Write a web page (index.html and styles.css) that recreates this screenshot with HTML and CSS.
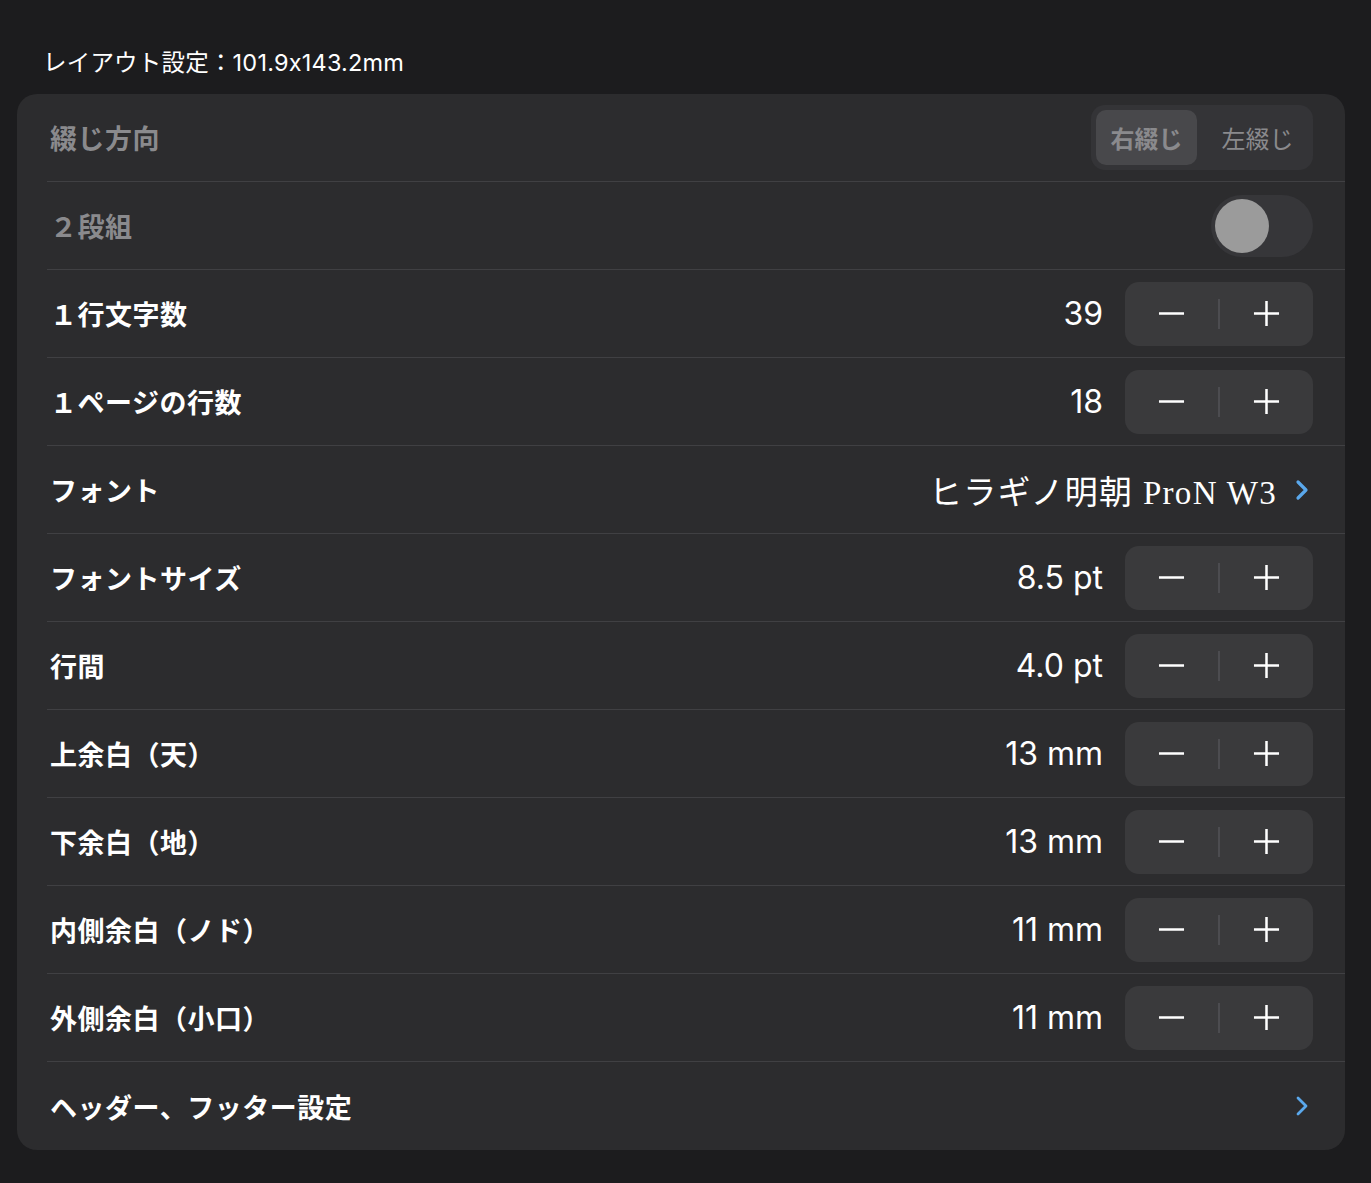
FILE: index.html
```html
<!DOCTYPE html>
<html lang="ja">
<head>
    <meta charset="UTF-8">
    <meta name="viewport" content="width=device-width, initial-scale=1.0">
    <title>レイアウト設定</title>
    <link rel="stylesheet" href="styles.css">
</head>
<body>

<div class="page">
    <div class="section-title">レイアウト設定：101.9x143.2mm</div>

    <div class="card">
        <!-- 綴じ方向 -->
        <div class="row">
            <div class="label disabled">綴じ方向</div>
            <div class="segmented">
                <div class="segment selected">右綴じ</div>
                <div class="segment">左綴じ</div>
            </div>
        </div>

        <!-- 2段組 -->
        <div class="row">
            <div class="label disabled">２段組</div>
            <div class="toggle"><div class="knob"></div></div>
        </div>

        <div class="row">
            <div class="label">１行文字数</div>
            <div class="control">
                <span class="value">39</span>
                <div class="stepper">
                    <button class="step"><svg viewBox="0 0 28 28"><path d="M1 14h26"/></svg></button>
                    <span class="divider"></span>
                    <button class="step"><svg viewBox="0 0 28 28"><path d="M1 14h26M14 1v26"/></svg></button>
                </div>
            </div>
        </div>

        <div class="row">
            <div class="label">１ページの行数</div>
            <div class="control">
                <span class="value">18</span>
                <div class="stepper">
                    <button class="step"><svg viewBox="0 0 28 28"><path d="M1 14h26"/></svg></button>
                    <span class="divider"></span>
                    <button class="step"><svg viewBox="0 0 28 28"><path d="M1 14h26M14 1v26"/></svg></button>
                </div>
            </div>
        </div>

        <div class="row">
            <div class="label">フォント</div>
            <div class="control">
                <span class="font-name">ヒラギノ明朝 ProN W3</span>
                <svg class="chevron" viewBox="0 0 14 22"><path d="M3 3l8 8-8 8"/></svg>
            </div>
        </div>

        <div class="row">
            <div class="label">フォントサイズ</div>
            <div class="control">
                <span class="value">8.5 pt</span>
                <div class="stepper">
                    <button class="step"><svg viewBox="0 0 28 28"><path d="M1 14h26"/></svg></button>
                    <span class="divider"></span>
                    <button class="step"><svg viewBox="0 0 28 28"><path d="M1 14h26M14 1v26"/></svg></button>
                </div>
            </div>
        </div>

        <div class="row">
            <div class="label">行間</div>
            <div class="control">
                <span class="value">4.0 pt</span>
                <div class="stepper">
                    <button class="step"><svg viewBox="0 0 28 28"><path d="M1 14h26"/></svg></button>
                    <span class="divider"></span>
                    <button class="step"><svg viewBox="0 0 28 28"><path d="M1 14h26M14 1v26"/></svg></button>
                </div>
            </div>
        </div>

        <div class="row">
            <div class="label">上余白（天）</div>
            <div class="control">
                <span class="value">13 mm</span>
                <div class="stepper">
                    <button class="step"><svg viewBox="0 0 28 28"><path d="M1 14h26"/></svg></button>
                    <span class="divider"></span>
                    <button class="step"><svg viewBox="0 0 28 28"><path d="M1 14h26M14 1v26"/></svg></button>
                </div>
            </div>
        </div>

        <div class="row">
            <div class="label">下余白（地）</div>
            <div class="control">
                <span class="value">13 mm</span>
                <div class="stepper">
                    <button class="step"><svg viewBox="0 0 28 28"><path d="M1 14h26"/></svg></button>
                    <span class="divider"></span>
                    <button class="step"><svg viewBox="0 0 28 28"><path d="M1 14h26M14 1v26"/></svg></button>
                </div>
            </div>
        </div>

        <div class="row">
            <div class="label">内側余白（ノド）</div>
            <div class="control">
                <span class="value">11 mm</span>
                <div class="stepper">
                    <button class="step"><svg viewBox="0 0 28 28"><path d="M1 14h26"/></svg></button>
                    <span class="divider"></span>
                    <button class="step"><svg viewBox="0 0 28 28"><path d="M1 14h26M14 1v26"/></svg></button>
                </div>
            </div>
        </div>

        <div class="row">
            <div class="label">外側余白（小口）</div>
            <div class="control">
                <span class="value">11 mm</span>
                <div class="stepper">
                    <button class="step"><svg viewBox="0 0 28 28"><path d="M1 14h26"/></svg></button>
                    <span class="divider"></span>
                    <button class="step"><svg viewBox="0 0 28 28"><path d="M1 14h26M14 1v26"/></svg></button>
                </div>
            </div>
        </div>

        <div class="row last">
            <div class="label">ヘッダー、フッター設定</div>
            <div class="control">
                <svg class="chevron end" viewBox="0 0 14 22"><path d="M3 3l8 8-8 8"/></svg>
            </div>
        </div>
    </div>
</div>

</body>
</html>
```

FILE: styles.css
```css
body {
    margin: 0;
    padding: 0;
    background-color: #1c1c1e;
    color: #ffffff;
    font-family: Inter, "Noto Sans CJK JP", sans-serif;
}

.page {
    padding: 47px 26px 0 17px;
}

.section-title {
    font-size: 23.5px;
    line-height: 32px;
    padding-left: 26px;
    margin-bottom: 15px;
    letter-spacing: 0.2px;
}

.card {
    background-color: #2c2c2e;
    border-radius: 20px;
    padding-left: 30px;
}

.row {
    display: flex;
    align-items: center;
    justify-content: space-between;
    height: 87px;
    padding-right: 32px;
    border-bottom: 1px solid #404043;
}

.row.last {
    border-bottom: none;
    height: 88px;
}

.label {
    font-size: 27px;
    font-weight: 700;
    padding-left: 3px;
    letter-spacing: 0.5px;
}

.label.disabled {
    color: #8a8a8d;
}

.control {
    display: flex;
    align-items: center;
}

.value {
    font-size: 32px;
    margin-right: 22px;
}

.stepper {
    display: flex;
    align-items: center;
    width: 188px;
    height: 64px;
    background-color: #3a3a3c;
    border-radius: 14px;
}

.step {
    flex: 1;
    height: 100%;
    background: none;
    border: none;
    padding: 0;
    display: flex;
    align-items: center;
    justify-content: center;
}

.step svg {
    width: 27px;
    height: 27px;
    stroke: #ffffff;
    stroke-width: 2.6;
    fill: none;
}

.divider {
    width: 2px;
    height: 30px;
    background-color: #4c4c50;
}

.segmented {
    display: flex;
    padding: 5px;
    background-color: #343437;
    border-radius: 14px;
    margin-top: -1px;
}

.segment {
    width: 101px;
    height: 55px;
    display: flex;
    align-items: center;
    justify-content: center;
    font-size: 24px;
    color: #8a8a8d;
    border-radius: 10px;
}

.segment + .segment {
    width: 111px;
    padding-left: 10px;
    box-sizing: border-box;
}

.segment.selected {
    background-color: #48484b;
    font-weight: 700;
}

.toggle {
    width: 102px;
    height: 62px;
    border-radius: 31px;
    background-color: #363639;
    display: flex;
    align-items: center;
    padding-left: 4px;
    box-sizing: border-box;
}

.knob {
    width: 54px;
    height: 54px;
    border-radius: 50%;
    background-color: #9b9b9b;
}

.font-name {
    font-family: "Liberation Serif", "Noto Sans CJK JP", serif;
    font-size: 33px;
    letter-spacing: 1.3px;
    margin-right: 18px;
}

.chevron {
    width: 14px;
    height: 22px;
    margin-right: 4px;
    stroke: #5aa8ec;
    stroke-width: 3.2;
    fill: none;
    stroke-linecap: round;
    stroke-linejoin: round;
}

.chevron.end {
    stroke-width: 2.8;
}
```
